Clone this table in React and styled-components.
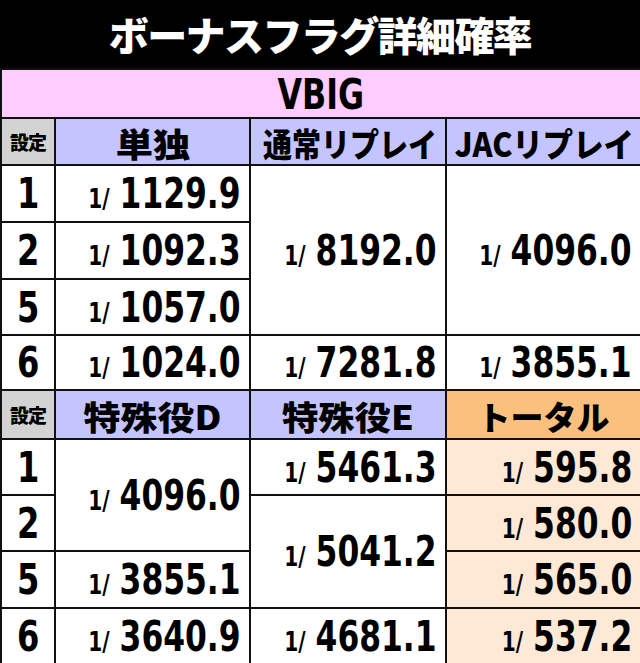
import React from "react";
import styled, { createGlobalStyle } from "styled-components";

const GlobalStyle = createGlobalStyle`
  html, body {
    margin: 0;
    padding: 0;
    background: #ffffff;
  }
  body {
    font-family: "DejaVu Sans Condensed", "Noto Sans CJK JP", sans-serif;
  }
`;

const NUM_FONT = `"DejaVu Sans Condensed", "Noto Sans CJK JP", sans-serif`;
const JP_FONT = `"Noto Sans CJK JP", sans-serif`;

const Page = styled.div`
  width: 640px;
  height: 663px;
  background: #ffffff;
  overflow: hidden;
`;

const Title = styled.h1`
  margin: 0;
  height: 68px;
  background: #000000;
  color: #ffffff;
  display: flex;
  align-items: center;
  justify-content: center;
  font-family: ${JP_FONT};
  font-weight: 900;
  font-size: 40px;
  letter-spacing: -1.6px;
  line-height: 1;
`;

const Table = styled.table`
  width: 640px;
  border-collapse: collapse;
  table-layout: fixed;
  border: 2px solid #111111;
`;

const Row = styled.tr`
  height: ${(p) => p.$h}px;
`;

const Cell = styled.td`
  border: 2px solid #111111;
  padding: 0;
  background: ${(p) => p.$bg || "#ffffff"};
  color: #000000;
  line-height: 1;
  white-space: nowrap;
`;

/* narrows or widens the glyphs of a cell without touching its layout box */
const Squeeze = styled.span`
  display: inline-block;
  vertical-align: middle;
  line-height: 1.05;
  transform: scaleX(${(p) => p.$sx || 1});
  transform-origin: ${(p) => p.$origin || "center"} center;
`;

const Banner = styled(Cell)`
  background: #ffccff;
  text-align: center;
  font-family: ${NUM_FONT};
  font-weight: 700;
  font-size: 43px;
`;

const Head = styled(Cell)`
  text-align: center;
  font-family: ${JP_FONT};
  font-weight: 900;
  font-size: 33px;
  background: ${(p) => p.$bg || "#c4c4ff"};
`;

const SetHead = styled(Cell)`
  background: #d3d3d3;
  text-align: center;
  font-family: ${JP_FONT};
  font-weight: 900;
  font-size: 19px;
  letter-spacing: -1px;
`;

const SetNum = styled(Cell)`
  text-align: center;
  font-family: ${NUM_FONT};
  font-weight: 700;
  font-size: 42px;
`;

const Value = styled(Cell)`
  text-align: right;
  padding-right: 8px;
  font-family: ${NUM_FONT};
  font-weight: 700;
  font-size: 42px;
`;

const Prefix = styled.span`
  font-size: 27px;
  margin-right: 12px;
`;

function Prob({ v, bg, rowSpan }) {
  return (
    <Value $bg={bg} rowSpan={rowSpan}>
      <Squeeze $sx={0.83} $origin="right">
        <Prefix>1/</Prefix>
        {v}
      </Squeeze>
    </Value>
  );
}

function Setting({ n }) {
  return (
    <SetNum>
      <Squeeze $sx={0.85}>{n}</Squeeze>
    </SetNum>
  );
}

function Header({ text, sx, bg }) {
  return (
    <Head $bg={bg}>
      <Squeeze $sx={sx}>{text}</Squeeze>
    </Head>
  );
}

const ORANGE = "#fde9d5";

export default function App() {
  return (
    <Page>
      <GlobalStyle />
      <Title>ボーナスフラグ詳細確率</Title>
      <Table>
        <colgroup>
          <col style={{ width: 54 }} />
          <col style={{ width: 195 }} />
          <col style={{ width: 196 }} />
          <col style={{ width: 195 }} />
        </colgroup>
        <tbody>
          <Row $h={47}>
            <Banner colSpan={4}>
              <Squeeze $sx={0.82}>VBIG</Squeeze>
            </Banner>
          </Row>
          <Row $h={47}>
            <SetHead>設定</SetHead>
            <Header text="単独" sx={1.13} />
            <Header text="通常リプレイ" sx={0.88} />
            <Header text="JACリプレイ" sx={0.92} />
          </Row>
          <Row $h={57}>
            <Setting n="1" />
            <Prob v="1129.9" />
            <Prob v="8192.0" rowSpan={3} />
            <Prob v="4096.0" rowSpan={3} />
          </Row>
          <Row $h={57}>
            <Setting n="2" />
            <Prob v="1092.3" />
          </Row>
          <Row $h={56}>
            <Setting n="5" />
            <Prob v="1057.0" />
          </Row>
          <Row $h={55}>
            <Setting n="6" />
            <Prob v="1024.0" />
            <Prob v="7281.8" />
            <Prob v="3855.1" />
          </Row>
          <Row $h={49}>
            <SetHead>設定</SetHead>
            <Header text="特殊役D" sx={1.12} />
            <Header text="特殊役E" sx={1.1} />
            <Header text="トータル" sx={1} bg="#fbc07e" />
          </Row>
          <Row $h={56}>
            <Setting n="1" />
            <Prob v="4096.0" rowSpan={2} />
            <Prob v="5461.3" />
            <Prob v="595.8" bg={ORANGE} />
          </Row>
          <Row $h={56}>
            <Setting n="2" />
            <Prob v="5041.2" rowSpan={2} />
            <Prob v="580.0" bg={ORANGE} />
          </Row>
          <Row $h={57}>
            <Setting n="5" />
            <Prob v="3855.1" />
            <Prob v="565.0" bg={ORANGE} />
          </Row>
          <Row $h={57}>
            <Setting n="6" />
            <Prob v="3640.9" />
            <Prob v="4681.1" />
            <Prob v="537.2" bg={ORANGE} />
          </Row>
        </tbody>
      </Table>
    </Page>
  );
}
